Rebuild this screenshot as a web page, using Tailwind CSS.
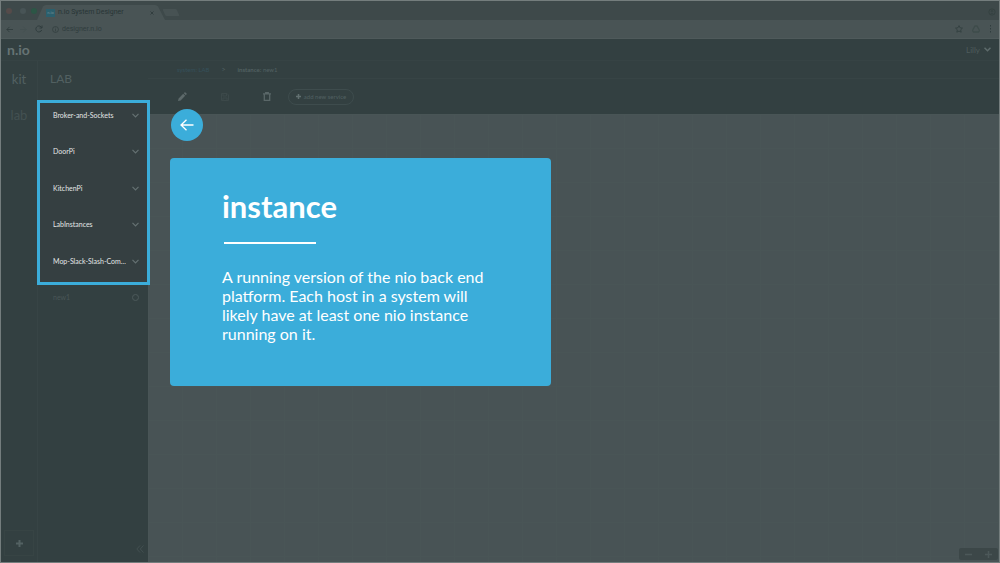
<!DOCTYPE html>
<html lang="en">
<head>
<meta charset="utf-8">
<meta name="viewport" content="width=device-width, initial-scale=1">
<title>n.io System Designer</title>
<script src="https://cdn.jsdelivr.net/npm/@tailwindcss/browser@4"></script>
</head>
<body class="flex h-screen flex-col overflow-hidden border border-[#747d7d] bg-[#334041] font-['Lato',sans-serif] text-[#526061]">

<!-- Browser chrome -->
<div class="flex h-[19px] shrink-0 items-end bg-[#3e494a]">
  <div class="flex h-full w-10 items-center gap-1 pl-[5px]">
    <span class="size-[6px] rounded-full bg-[#554b4a]"></span>
    <span class="ml-1 size-[6px] rounded-full bg-[#485456]"></span>
    <span class="ml-px size-[6px] rounded-full bg-[#2c5646]"></span>
  </div>
  <div class="relative flex h-[15px] w-[123px] items-center gap-[3px] pl-[5px] text-[#283536]">
    <svg class="absolute inset-0 -ml-1 h-full w-[128px]" viewBox="0 0 128 15" preserveAspectRatio="none" aria-hidden="true"><path d="M0 15 6 1.500Q7 0 9 0H118Q120 0 121 1.500L128 15Z" fill="#495455"/></svg>
    <span class="relative flex h-2 w-[9px] items-center justify-center bg-[#2b5f6d] text-[4px] font-bold text-[#60838b]">n.io</span>
    <span class="relative whitespace-nowrap font-['Roboto',sans-serif] text-[7px]">n.io System Designer</span>
    <button aria-label="Close tab" class="relative ml-auto mr-[10px]"><svg class="size-1" viewBox="0 0 4 4" fill="none" stroke="currentColor" stroke-width=".7"><path d="m.5.5 3 3m0-3-3 3"/></svg></button>
  </div>
  <button aria-label="New tab" class="mb-1 h-[7px] w-[14px] skew-x-[24deg] rounded-[1px] bg-[#475253]"></button>
  <button aria-label="Profile" class="mb-1 ml-auto mr-[3px] text-[#354142]"><svg class="size-2" viewBox="0 0 9 9" fill="none" stroke="currentColor"><circle cx="4.500" cy="4.500" r="3.500"/><circle cx="4.500" cy="3.500" r="1"/><path d="M2.500 7q2-2 4 0"/></svg></button>
</div>
<div class="flex h-[19px] shrink-0 items-center border-b border-[#4f5a5b] bg-[#495455] px-[5px] text-[#303d3e]">
  <button aria-label="Back"><svg class="size-[7px]" viewBox="0 0 8 8" fill="none" stroke="currentColor"><path d="M8 4H1m3-3L1 4l3 3"/></svg></button>
  <button aria-label="Forward" class="ml-[7px] text-[#435051]"><svg class="size-[7px]" viewBox="0 0 8 8" fill="none" stroke="currentColor"><path d="M0 4h7M4 1l3 3-3 3"/></svg></button>
  <button aria-label="Reload" class="ml-2"><svg class="size-2" viewBox="0 0 8 8" fill="none" stroke="currentColor"><path d="M6.700 5A3 3 0 1 1 6 1.800L7 3M7 .5V3H4.500"/></svg></button>
  <label for="address" class="ml-[9px]"><span class="sr-only">Address</span><svg class="size-[7px]" viewBox="0 0 8 8" fill="none" stroke="currentColor" stroke-width=".8"><circle cx="4" cy="4" r="3.400"/><path d="M4 3.500V6M4 2v.8"/></svg></label>
  <input id="address" type="text" value="designer.n.io" class="ml-[3px] h-4 min-w-0 flex-1 bg-transparent font-['Roboto',sans-serif] text-[7px] leading-4 outline-none">
  <button aria-label="Bookmark"><svg class="size-2" viewBox="0 0 10 10" fill="none" stroke="currentColor"><path d="m5 .8 1.300 2.700 3 .4-2.200 2.100.6 3L5 7.600 2.300 9l.6-3L.7 3.900l3-.4Z"/></svg></button>
  <button aria-label="Drive extension" class="ml-[9px] text-[#3e4c4b]"><svg class="size-2" viewBox="0 0 8 8" fill="none" stroke="currentColor" stroke-width="1.300"><path d="M3 1h2l2.500 4.500-1 1.500h-5l-1-1.500Z"/></svg></button>
  <button aria-label="Browser menu" class="ml-[7px]"><svg class="h-2 w-[7px]" viewBox="0 0 7 8" fill="currentColor"><path d="M3 0h1v1.500H3zM3 3h1v1.500H3zM3 6h1v1.500H3z"/></svg></button>
</div>

<!-- Application header -->
<header class="flex h-[22px] shrink-0 items-center justify-between border-b border-[#364344] pl-1.5 pr-2">
  <a href="#" class="text-[14px] leading-4 font-bold text-[#667374]">n.io</a>
  <button class="flex items-center gap-1 text-[8px] text-[#4e5c5d]">Lilly
    <svg class="h-[5px] w-[7px]" viewBox="0 0 7 5" fill="none" stroke="#5e6b6c" stroke-width="1.500"><path d="m.5.8 3 3 3-3"/></svg></button>
</header>

<div class="flex min-h-0 flex-1">
  <nav class="flex w-[37px] shrink-0 flex-col border-r border-[#374445] text-[13px] leading-4">
    <a href="#" class="flex h-9 items-center justify-center text-[#526061]">kit</a>
    <a href="#" class="flex h-9 items-center justify-center text-[#435152]">lab</a>
    <button aria-label="Add" class="mx-auto mt-auto mb-[6px] flex h-[26px] w-[30px] items-center justify-center border border-[#374444] text-[#536162]"><svg class="size-[7px]" viewBox="0 0 7 7" fill="none" stroke="currentColor" stroke-width="2"><path d="M3.500 0v7M0 3.500h7"/></svg></button>
  </nav>

  <aside class="flex w-[110px] shrink-0 flex-col">
    <h2 class="flex h-[39px] shrink-0 items-center pb-1 pl-3 text-[12px] leading-4 text-[#526061]">LAB</h2>
    <ul class="relative z-10 -mr-[2px] -ml-px flex h-[185px] shrink-0 flex-col justify-between border-[3px] border-[#3badda] bg-[#353f41] pt-1 pr-2 pb-[13px] pl-[13px] text-[7px] text-[#e3e6e6]">
      <li><button class="flex h-4 w-full items-center justify-between whitespace-nowrap">Broker-and-Sockets<svg class="h-[5px] w-[7px]" viewBox="0 0 7 5" fill="none" stroke="#657172" stroke-width="1.200"><path d="m.5.8 3 3 3-3"/></svg></button></li>
      <li><button class="flex h-4 w-full items-center justify-between whitespace-nowrap">DoorPi<svg class="h-[5px] w-[7px]" viewBox="0 0 7 5" fill="none" stroke="#657172" stroke-width="1.200"><path d="m.5.8 3 3 3-3"/></svg></button></li>
      <li><button class="flex h-4 w-full items-center justify-between whitespace-nowrap">KitchenPi<svg class="h-[5px] w-[7px]" viewBox="0 0 7 5" fill="none" stroke="#657172" stroke-width="1.200"><path d="m.5.8 3 3 3-3"/></svg></button></li>
      <li><button class="flex h-4 w-full items-center justify-between whitespace-nowrap">LabInstances<svg class="h-[5px] w-[7px]" viewBox="0 0 7 5" fill="none" stroke="#657172" stroke-width="1.200"><path d="m.5.8 3 3 3-3"/></svg></button></li>
      <li><button class="flex h-4 w-full items-center justify-between whitespace-nowrap">Mop-Slack-Slash-Com...<svg class="h-[5px] w-[7px]" viewBox="0 0 7 5" fill="none" stroke="#657172" stroke-width="1.200"><path d="m.5.8 3 3 3-3"/></svg></button></li>
    </ul>
    <a href="#" class="flex h-6 items-center justify-between pr-[9px] pl-[15px] text-[7px] text-[#495657]">new1
      <span class="size-[7px] rounded-full border border-[#4d5a5b]"></span></a>
    <button aria-label="Collapse sidebar" class="mt-auto mr-1 mb-[9px] self-end text-[#435051]"><svg class="size-2" viewBox="0 0 8 8" fill="none" stroke="currentColor"><path d="M4 .5.800 4 4 7.500M7.500.5 4.300 4l3.200 3.500"/></svg></button>
  </aside>

  <main class="relative flex min-w-0 flex-1 flex-col">
    <div class="flex h-[18px] shrink-0 items-center border-b border-[#374445] pl-[29px] text-[6px]">
      <a href="#" class="text-[#35505b]">system: LAB</a>
      <span class="mx-3 text-[7px]">&gt;</span>
      <span><b>instance:</b> new1</span>
    </div>
    <div class="flex h-[35px] shrink-0 items-center pl-[30px]">
      <button aria-label="Edit" class="text-[#5d696a]"><svg class="size-[9px]" viewBox="0 0 9 9" fill="currentColor"><path d="M0 9 .6 6.400 5.200 1.800l2 2L2.600 8.400ZM5.800 1.200 6.700.3Q7.100 0 7.500.4l1.100 1.100q.4.4 0 .8l-.8.9Z"/></svg></button>
      <button aria-label="Save" class="ml-[34px] text-[#3c494a]"><svg class="size-2" viewBox="0 0 8 8" fill="none" stroke="currentColor"><path d="M.5.5h5.500L7.500 2v5.500h-7ZM2 .5v2.500h3.500V.5M2 7.500V5h4v2.500"/></svg></button>
      <button aria-label="Delete" class="ml-[34px] text-[#5a6768]"><svg class="h-[9px] w-2" viewBox="0 0 8 9" fill="none" stroke="currentColor" stroke-width="1.300"><path d="M0 1.800h8M2.700 1.500V.6h2.600v.9M1.300 2v6.300h5.400V2"/></svg></button>
      <button class="ml-[17px] flex h-4 w-[66px] items-center justify-center gap-[3px] rounded-full border border-[#3e4c4d] text-[6px] whitespace-nowrap"><svg class="size-[5px]" viewBox="0 0 5 5" fill="none" stroke="#627071" stroke-width="1.500"><path d="M2.500 0v5M0 2.500h5"/></svg>add new service</button>
    </div>

    <div class="flex min-h-0 flex-1 items-end justify-end bg-[#485355] bg-[linear-gradient(#495556_1px,transparent_1px),linear-gradient(90deg,#495556_1px,transparent_1px)] bg-[size:34px_34px]">
      <div class="mr-px mb-[2px] flex h-3 w-[39px] items-center justify-around rounded-[2px] bg-[#3c4748] text-[#4c5859]">
        <button aria-label="Zoom out"><svg class="size-[7px]" viewBox="0 0 7 7" stroke="currentColor" stroke-width="1.500"><path d="M0 3.500h7"/></svg></button>
        <button aria-label="Zoom in"><svg class="size-[7px]" viewBox="0 0 7 7" stroke="currentColor" stroke-width="1.500"><path d="M0 3.500h7M3.500 0v7"/></svg></button>
      </div>
    </div>

    <!-- Glossary overlay -->
    <section class="absolute top-12 left-[22px] w-[381px] max-w-full text-white">
      <button aria-label="Go back" class="ml-px flex size-8 items-center justify-center rounded-full bg-[#3badda]"><svg class="h-3 w-[14px]" viewBox="0 0 14 12" fill="none" stroke="currentColor" stroke-width="1.300"><path d="M13.500 6H1M6.500.8 1 6l5.500 5.200"/></svg></button>
      <article class="mt-[17px] rounded-[4px] bg-[#3badda] px-[52px] pt-7 pb-[43px]">
        <h1 class="text-[31px] leading-10 font-bold">instance</h1>
        <hr class="mt-4 ml-[2px] w-[92px] border-t-2 border-white">
        <p class="mt-[23px] text-[16px] leading-[19px]">A running version of the nio back end platform. Each host in a system will likely have at least one nio instance running on it.</p>
      </article>
    </section>
  </main>
</div>
</body>
</html>
